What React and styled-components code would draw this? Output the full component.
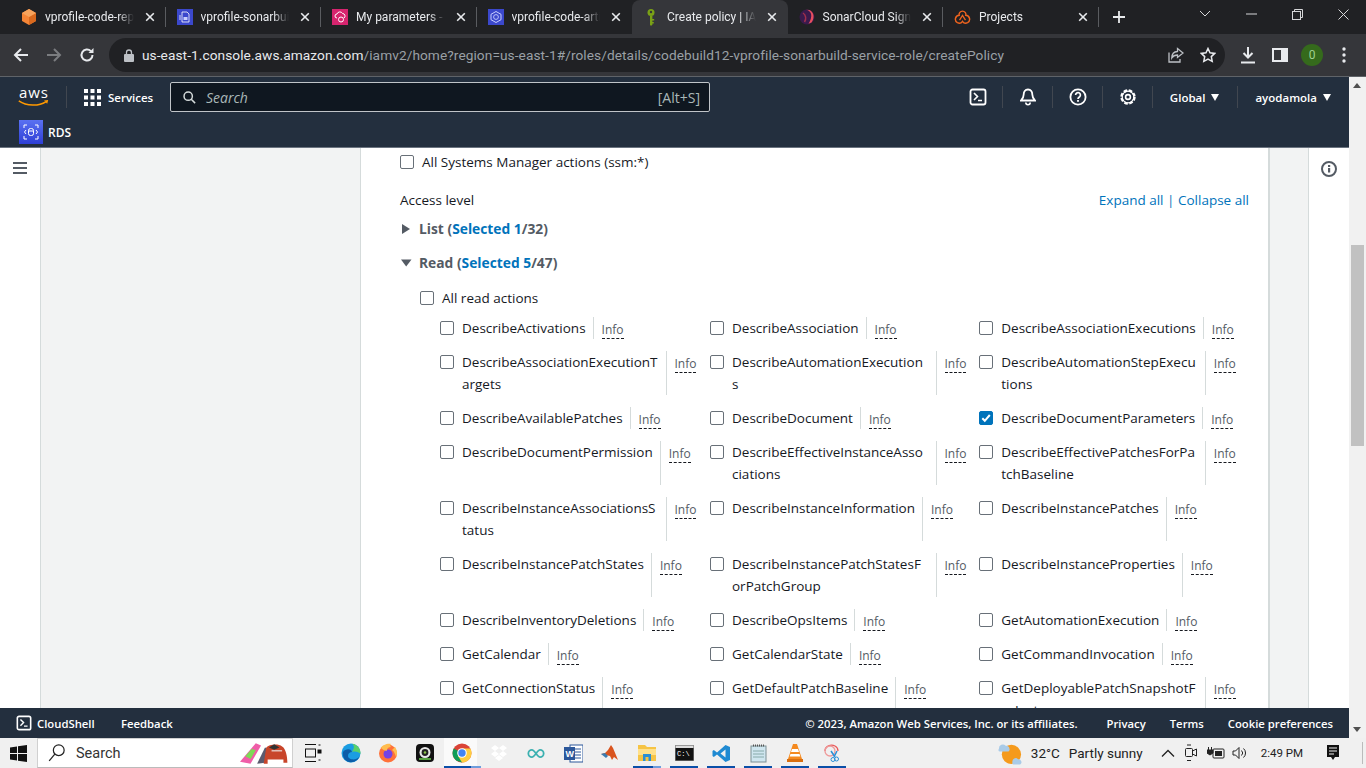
import React from "react";
import styled, { createGlobalStyle } from "styled-components";

const Global = createGlobalStyle`
  html, body { margin: 0; padding: 0; height: 100%; overflow: hidden; }
  body { font-family: "Open Sans", "Noto Sans", sans-serif; background: #fff; }
  * { box-sizing: border-box; }
  svg { display: block; }
`;

const Screen = styled.div`
  width: 1366px; height: 768px; display: flex; flex-direction: column; overflow: hidden;
`;

/* ---------- browser tabs ---------- */
const TabStrip = styled.div`
  height: 34px; background: #202124; display: flex; align-items: stretch; padding-left: 10px; flex: none;
`;
const Tab = styled.div`
  width: 155.5px; height: 34px; padding: 0 8px 0 11px; display: flex; align-items: center; gap: 8px;
  color: #e8eaed;
  background: ${p => (p.$active ? "#35363a" : "transparent")};
  border-radius: ${p => (p.$active ? "8px 8px 0 0" : "0")};
  position: relative;
  flex: none;
  ${p => p.$sep && `&::after{content:"";position:absolute;right:0;top:7px;height:20px;width:1px;background:#5a5c60;}`}
`;
const TabTitle = styled.span`
  flex: 1; white-space: nowrap; overflow: hidden; min-width: 0;
  mask-image: linear-gradient(90deg, #000 82%, transparent);
  font: 12px "Roboto", "Liberation Sans", sans-serif;
`;
const TabClose = styled.span`
  flex: none; width: 16px; display: flex; justify-content: center; color: #e8eaed;
`;
const NewTab = styled.div`
  width: 36px; margin-left: 2px; display: flex; align-items: center; justify-content: center; color: #e8eaed;
`;
const StripSpacer = styled.div`flex: 1;`;
const WindowButton = styled.div`
  width: 46px; display: flex; align-items: center; justify-content: center; color: #d6d7d9; padding-bottom: 6px;
`;

/* ---------- browser toolbar ---------- */
const Toolbar = styled.div`
  height: 43px; background: #35363a; display: flex; align-items: center; padding: 0 6px 0 4px; flex: none;
  border-bottom: 1px solid #5f6368;
`;
const NavIcon = styled.div`
  width: 33px; height: 34px; display: flex; align-items: center; justify-content: center;
  color: ${p => (p.$dim ? "#7b7d80" : "#e8eaed")}; flex: none;
`;
const AddressBar = styled.div`
  margin-left: 6px; width: 1116px; height: 34px; border-radius: 17px; background: #202124;
  display: flex; align-items: center; padding: 0 1px 0 15px; gap: 8px; flex: none;
`;
const Url = styled.div`
  flex: 1; font: 13.7px "Roboto", "Liberation Sans", sans-serif; color: #9aa0a6; white-space: nowrap; overflow: hidden;
  letter-spacing: 0.07px;
`;
const UrlHost = styled.span`color: #e8eaed;`;
const BarIcon = styled.div`
  width: 32px; display: flex; justify-content: center; color: #bdc1c6; margin-left: -8px; flex: none;
`;
const ToolIcons = styled.div`
  display: flex; align-items: center; flex: none; margin-left: 7px;
`;
const ToolIcon = styled.div`
  width: 32px; height: 32px; display: flex; align-items: center; justify-content: center; color: #e8eaed; flex: none;
`;
const Avatar = styled.div`
  width: 22px; height: 22px; border-radius: 50%; background: #356a1c; color: #9fd08f;
  font: 12px "Roboto", sans-serif; display: flex; align-items: center; justify-content: center;
`;

/* ---------- console nav ---------- */
const ConsoleNav = styled.div`
  height: 70px; background: #232f3e; flex: none; display: flex; flex-direction: column;
  color: #fff; font: 600 11.5px "Open Sans", sans-serif;
`;
const NavTop = styled.div`
  height: 40px; display: flex; align-items: center; padding-left: 18px;
`;
const NavDivider = styled.div`
  width: 1px; height: 22px; background: #414750; flex: none; margin: ${p => p.$m || "0"};
`;
const ServicesMenu = styled.div`
  display: flex; align-items: center; gap: 7px; width: 70px; flex: none;
`;
const SearchBox = styled.div`
  margin-left: 16px; width: 540px; height: 30px; background: #0f1720; border: 1px solid #c0c4c8; border-radius: 2px;
  display: flex; align-items: center; padding: 0 9px 0 12px; gap: 10px; flex: none; font-weight: 400; font-size: 14px; color: #aab7b8;
`;
const SearchText = styled.span`font-style: italic; flex: 1;`;
const SearchKey = styled.span`font-size: 14px;`;
const NavIcons = styled.div`
  margin-left: auto; display: flex; align-items: center; padding-right: 18px;
`;
const NavGlyph = styled.div`
  width: 49px; padding-left: 1px; display: flex; justify-content: center; align-items: center; flex: none; color: #fff;
`;
const NavSelect = styled.div`
  display: flex; align-items: center; gap: 6px; padding: 0 ${p => p.$pr || 0}px 0 ${p => p.$pl || 0}px; flex: none; color: #fff;
`;
const Caret = styled.span`
  width: 0; height: 0; border-left: 4.5px solid transparent; border-right: 4.5px solid transparent; border-top: 7px solid #fff;
  display: inline-block;
`;
const Pinned = styled.div`
  height: 30px; display: flex; align-items: center; padding: 0 0 0 19px; gap: 5px; font-size: 12px;
`;
const RdsTile = styled.div`
  width: 24px; height: 24px; background: linear-gradient(0deg, #2e3fd6, #5a71f2); display: flex; align-items: center; justify-content: center; flex: none;
`;

/* ---------- content ---------- */
const Body = styled.div`
  flex: 1; min-height: 0; display: flex; background: #f2f3f3; border-top: 1px solid #6b7480;
`;
const SideRail = styled.div`
  width: 41px; background: #fff; border-right: 1px solid #d5dbdb; padding: 14px 0 0 13px; flex: none; color: #545b64;
`;
const Gutter = styled.div`width: ${p => p.$w}px; flex: none;`;
const Panel = styled.div`
  width: 910px; flex: none; background: #fff; border-left: 1px solid #d5dbdb; border-right: 2px solid #d5dbdb;
  padding: 3px 19px 0 39px; overflow: hidden; color: #16191f;
  font: 13.5px/22px "Open Sans", sans-serif;
`;
const RightRail = styled.div`
  width: 41px; flex: none; background: #fff; border-left: 1px solid #d5dbdb; padding: 13px 0 0 12px; color: #545b64;
`;
const CheckRow = styled.label`
  display: flex; align-items: center; gap: 8px; height: 22px; padding-left: ${p => p.$indent || 0}px;
  margin-top: ${p => p.$mt || 0}px;
`;
const Box = styled.span`
  width: 14px; height: 14px; flex: none; border-radius: 2px; border: 1px solid #687078; background: #fff;
  display: inline-flex; align-items: center; justify-content: center; margin-top: ${p => p.$mt || 0}px;
  ${p => p.$on && "background:#0073bb;border-color:#0073bb;"}
`;
const AccessHead = styled.div`
  margin-top: 16px; display: flex; justify-content: space-between;
`;
const Links = styled.div`color: #0073bb;`;
const Group = styled.div`
  display: flex; align-items: center; margin-top: ${p => p.$mt}px; height: 22px; font-weight: 700; font-size: 13.8px; color: #545b64; gap: 9px;
`;
const Blue = styled.span`color: #0073bb;`;
const Arrow = styled.span`
  width: 10px; flex: none; display: flex; justify-content: flex-start; color: #545b64;
`;
const ActionGrid = styled.div`
  display: grid; grid-template-columns: 270px 269.3px 270px; margin: 8px 0 0 40px; row-gap: 12px;
`;
const Action = styled.div`
  display: flex; align-items: flex-start;
`;
const ActionLabel = styled.span`
  margin-left: 8px; max-width: 196.5px; word-break: break-all;
`;
const InfoWrap = styled.span`
  margin-left: 7px; padding-left: 8px; border-left: 1px solid #d5dbdb; align-self: stretch; flex: none;
  display: flex; align-items: flex-start; min-height: 22px;
`;
const InfoLink = styled.span`
  display: block; font-size: 12px; line-height: 15px; padding-bottom: 1px; color: #545b64; border-bottom: 1px dashed #16191f; margin-top: 5px;
`;

/* ---------- footer ---------- */
const Footer = styled.div`
  height: 30px; flex: none; background: #232f3e; color: #fff; display: flex; align-items: center; padding: 0 16px;
  font: 600 11.3px "Open Sans", sans-serif;
`;
const FooterLeft = styled.div`display: flex; align-items: center; gap: 5px; width: 105px;`;
const FooterRight = styled.div`margin-left: auto; display: flex; gap: 24px;`;
const Copyright = styled.span`margin-right: 5px;`;

/* ---------- scrollbar ---------- */
const Middle = styled.div`
  flex: 1; min-height: 0; display: flex;
`;
const Main = styled.div`
  width: 1349px; display: flex; flex-direction: column; flex: none;
`;
const Scrollbar = styled.div`
  width: 17px; background: #f1f1f1; position: relative; flex: none;
`;
const ScrollThumb = styled.div`
  position: absolute; left: 2px; width: 13px; top: 168px; height: 201px; background: #c1c1c1;
`;
const ScrollArrow = styled.div`
  position: absolute; ${p => p.$pos}; left: 4px; width: 0; height: 0; border-left: 4px solid transparent; border-right: 4px solid transparent;
  ${p => (p.$up ? "border-bottom: 5px solid #505050;" : "border-top: 5px solid #505050;")}
`;

/* ---------- taskbar ---------- */
const Taskbar = styled.div`
  height: 30px; flex: none; background: #f0f0f0; display: flex; align-items: center; color: #111;
  font: 14px "Roboto", "Liberation Sans", sans-serif;
`;
const StartBtn = styled.div`width: 37px; display: flex; justify-content: center; flex: none;`;
const TaskSearch = styled.div`
  width: 256px; height: 30px; background: #fff; border: 1px solid #d0d0d0; border-bottom-color: #bbb; display: flex; align-items: center; padding-left: 10px; gap: 11px; flex: none;
  font-size: 14.5px; color: #333;
`;
const TaskSearchArt = styled.div`margin-left: auto; margin-right: 2px; display: flex; align-items: center;`;
const TaskIcon = styled.div`
  width: ${p => p.$w}px; height: 30px; display: flex; align-items: center; justify-content: center; flex: none; position: relative;
  ${p => p.$active && "background: linear-gradient(90deg, #fafafa 90%, #f0f0f0 90%);"}
  ${p => p.$open && `&::after{content:"";position:absolute;left:${p.$active ? 0 : 4.5}px;right:${p.$active ? 0 : 4.5}px;bottom:0;height:2px;background:${p.$stack ? "linear-gradient(90deg,#0a4fa8 72%,#6f9ddc 72%)" : "#0a4fa8"};}`}
`;
const TrayWrap = styled.div`
  margin-left: auto; display: flex; align-items: center; height: 30px; color: #222;
`;
const TrayText = styled.span`
  white-space: nowrap; margin: ${p => p.$m || 0}; font-size: ${p => p.$s || 14}px;
`;
const TrayIcon = styled.div`
  width: ${p => p.$w || 22}px; margin-left: ${p => p.$ml || 0}px; display: flex; justify-content: center; flex: none;
`;
const DesktopEdge = styled.div`width: 1px; height: 22px; background: #bbb; margin-right: 3px; flex: none;`;

/* ---------- icons ---------- */
const X = () => (
  <svg width="10" height="10" viewBox="0 0 10 10"><path d="M1.2 1.2l7.6 7.6M8.8 1.2L1.2 8.8" stroke="currentColor" strokeWidth="1.6" /></svg>
);
const Fav = {
  pipeline: (
    <svg width="16" height="18" viewBox="0 0 16 18"><path d="M8 1l7 4v8l-7 4-7-4V5z" fill="#f58536" /><path d="M8 9l7-4v8l-7 4z" fill="#d9691e" /><path d="M8 1l7 4-7 4-7-4z" fill="#f7a35c" /></svg>
  ),
  build: (
    <svg width="16" height="16" viewBox="0 0 16 16"><rect width="16" height="16" fill="#3b48cc" /><path d="M5 3h5l2 2v8H5z" fill="none" stroke="#fff" strokeWidth=".8" /><path d="M3 6v5" stroke="#fff" strokeWidth=".8" /><rect x="6.500" y="8" width="4" height="3" fill="#c9cfff" /></svg>
  ),
  params: (
    <svg width="16" height="16" viewBox="0 0 16 16"><rect width="16" height="16" fill="#d6246e" /><path d="M5 9a2 2 0 010-4 3 3 0 015.500-.5A2.500 2.500 0 0112 9" fill="none" stroke="#fff" strokeWidth="1" /><circle cx="9" cy="10.500" r="2.500" fill="none" stroke="#fff" strokeWidth="1" /></svg>
  ),
  artifact: (
    <svg width="16" height="16" viewBox="0 0 16 16"><rect width="16" height="16" fill="#3b48cc" /><path d="M8 2.500l5 2.800v5.400l-5 2.800-5-2.800V5.300z" fill="none" stroke="#c9cfff" strokeWidth="1" /><circle cx="8" cy="8" r="2.400" fill="none" stroke="#c9cfff" strokeWidth=".9" /></svg>
  ),
  key: (
    <svg width="16" height="18" viewBox="-2 0 16 18"><circle cx="6" cy="4.500" r="3.500" fill="#7aa116" /><circle cx="6" cy="4" r="1.200" fill="#35363a" /><path d="M5 8h2.400v8.500L6 18l-1-1.200z" fill="#7aa116" /><path d="M7 11h2.200v1.600H7zM7 14h1.800v1.400H7z" fill="#7aa116" /></svg>
  ),
  sonar: (
    <svg width="16" height="16" viewBox="0 0 16 16"><circle cx="8" cy="8" r="7.500" fill="#3a1a4d" /><path d="M7 .8c6 1 7 7.200 2.500 14l3-1.200c3.500-4.500 2.500-10.500-2-12.500z" fill="#e84f5e" /><path d="M4 4c3 2 3.500 6 1.500 9" fill="none" stroke="#a0304c" strokeWidth="1.500" /></svg>
  ),
  cloud: (
    <svg width="17" height="17" viewBox="0 0 20 18"><path d="M10 1.500a4 4 0 013.900 4.900A4.600 4.600 0 0116 15a4.600 4.600 0 01-6-1.500A4.600 4.600 0 014 15 4.600 4.600 0 016.100 6.400 4 4 0 0110 1.500z" fill="none" stroke="#f0641e" strokeWidth="1.700" /><path d="M6.500 12L10 6.500l3.500 5.500" fill="none" stroke="#f0641e" strokeWidth="1.500" /></svg>
  ),
};
const tabs = [
  { t: "vprofile-code-repo", i: Fav.pipeline, sep: 1 },
  { t: "vprofile-sonarbuild", i: Fav.build, sep: 1 },
  { t: "My parameters - Systems", i: Fav.params, sep: 1 },
  { t: "vprofile-code-artifact", i: Fav.artifact },
  { t: "Create policy | IAM", i: Fav.key, active: 1 },
  { t: "SonarCloud Sign in", i: Fav.sonar, sep: 1 },
  { t: "Projects", i: Fav.cloud, sep: 1 },
];

const AwsLogo = () => (
  <svg width="32" height="20" viewBox="0 0 32 20">
    <text x="1" y="11" fontFamily="Open Sans" fontSize="15" fontWeight="400" fill="#fff" textLength="29">aws</text>
    <path d="M.8 13.800c8 5.500 20 5.500 27 1" fill="none" stroke="#ff9900" strokeWidth="1.600" />
    <path d="M26 13.500l4.200-.5-1 3.800z" fill="#ff9900" />
  </svg>
);
const Grid9 = () => (
  <svg width="17" height="17" viewBox="0 0 17 17" fill="#fff">
    {[0, 6.500, 13].flatMap(y => [0, 6.500, 13].map(x => <rect key={`${x}-${y}`} x={x} y={y} width="4" height="4" />))}
  </svg>
);
const Shell = ({ s = 18 }) => (
  <svg width={s} height={s} viewBox="0 0 18 18"><rect x="1.500" y="1.500" width="15" height="15" rx="2" fill="none" stroke="#fff" strokeWidth="1.800" /><path d="M5 5l3.500 3.500L5 12M9 12.500h4" fill="none" stroke="#fff" strokeWidth="1.600" /></svg>
);
const Bell = () => (
  <svg width="16" height="18" viewBox="0 0 16 18"><path d="M8 1.500c-3 0-4.300 2.400-4.300 5 0 3-1.400 4.500-2.700 6h14c-1.300-1.500-2.700-3-2.700-6 0-2.600-1.300-5-4.300-5z" fill="none" stroke="#fff" strokeWidth="1.800" /><path d="M5.800 14.500a2.200 2.200 0 004.400 0" fill="none" stroke="#fff" strokeWidth="1.600" /></svg>
);
const Help = () => (
  <svg width="18" height="18" viewBox="0 0 18 18"><circle cx="9" cy="9" r="7.600" fill="none" stroke="#fff" strokeWidth="1.800" /><path d="M6.600 7a2.400 2.400 0 114 1.800c-.9.700-1.600 1.100-1.600 2.200" fill="none" stroke="#fff" strokeWidth="1.700" /><rect x="8.100" y="12" width="1.800" height="1.800" fill="#fff" /></svg>
);
const Gear = () => (
  <svg width="18" height="18" viewBox="0 0 18 18"><circle cx="9" cy="9" r="6.500" fill="none" stroke="#fff" strokeWidth="2.400" strokeDasharray="3.500 1.600" /><circle cx="9" cy="9" r="5.800" fill="none" stroke="#fff" strokeWidth="1.200" /><circle cx="9" cy="9" r="2.400" fill="none" stroke="#fff" strokeWidth="1.600" /></svg>
);
const Check = () => (
  <svg width="10" height="10" viewBox="0 0 10 10"><path d="M1.300 5.300l2.500 2.500 5-5.800" fill="none" stroke="#fff" strokeWidth="2" /></svg>
);
const Tri = ({ open }) => (
  <svg width="12" height="10" viewBox="0 0 12 10" fill="#545b64" style={{ flex: "none" }}>
    {open ? <path d="M1 1.500h10.500L6.200 8.500z" /> : <path d="M2 0v10l8-5z" />}
  </svg>
);

const actions = [
  ["DescribeActivations"], ["DescribeAssociation"], ["DescribeAssociationExecutions"],
  ["DescribeAssociationExecutionTargets"], ["DescribeAutomationExecutions"], ["DescribeAutomationStepExecutions"],
  ["DescribeAvailablePatches"], ["DescribeDocument"], ["DescribeDocumentParameters", true],
  ["DescribeDocumentPermission"], ["DescribeEffectiveInstanceAssociations"], ["DescribeEffectivePatchesForPatchBaseline"],
  ["DescribeInstanceAssociationsStatus"], ["DescribeInstanceInformation"], ["DescribeInstancePatches"],
  ["DescribeInstancePatchStates"], ["DescribeInstancePatchStatesForPatchGroup"], ["DescribeInstanceProperties"],
  ["DescribeInventoryDeletions"], ["DescribeOpsItems"], ["GetAutomationExecution"],
  ["GetCalendar"], ["GetCalendarState"], ["GetCommandInvocation"],
  ["GetConnectionStatus"], ["GetDefaultPatchBaseline"], ["GetDeployablePatchSnapshotForInstance"],
];

const taskIcons = [
  { k: "view", w: 39.500, n: <svg width="18" height="18" viewBox="0 0 18 18" fill="none" stroke="#111"><path d="M1 .5h11M1 17.500h11" /><rect x="1.500" y="5" width="10" height="8" /><rect x="14" y="6" width="3" height="3" fill="#111" /><path d="M14.500 1h2M14.500 16h2" /></svg> },
  { k: "edge", n: <svg width="20" height="20" viewBox="0 0 20 20"><circle cx="10" cy="10" r="9.500" fill="#1b9de2" /><path d="M19 12c-1 5-6 8-11 7C4 18 1 14 2 9c2-3 8-4 9 0-2 0-4 1-4 4s5 4 8 3 4-3 4-4z" fill="#0c5da8" /><path d="M11 9c3-1 7 0 8.500 2C20 6 16 1 11 .8c3 2 2 5 0 8.200z" fill="#5ad06a" /></svg> },
  { k: "firefox", n: <svg width="20" height="20" viewBox="0 0 20 20"><circle cx="10" cy="10.500" r="9" fill="#ff7139" /><circle cx="10" cy="11" r="4.500" fill="#7542e5" /><path d="M3 5c1-3 7-5 10-4-1 1-1 2 0 3-2 0-4 1-4 3s-4 0-6-2z" fill="#ffbd4f" /><path d="M17 4c2 3 3 7 1 10-1-3-2-6-4-7z" fill="#ffbd4f" /></svg> },
  { k: "obs", n: <svg width="20" height="20" viewBox="0 0 20 20"><rect x="1" y="1" width="18" height="18" rx="4" fill="#111" /><circle cx="10" cy="9.500" r="5.500" fill="#e8e8e8" /><circle cx="10" cy="9.500" r="3.400" fill="#222" /><circle cx="10" cy="9.500" r="1.300" fill="#8bc34a" /><path d="M4 16h12" stroke="#6cd14f" strokeWidth="1.500" /></svg> },
  { k: "chrome", active: 1, open: 1, stack: 1, n: <svg width="20" height="20" viewBox="0 0 20 20"><circle cx="10" cy="10" r="9.500" fill="#db4437" /><path d="M10 10L1.800 5.500A9.500 9.500 0 004.500 17.800L10 19.500z" fill="#0f9d58" /><path d="M10 5.500h8.400A9.500 9.500 0 0110 19.500L6 13z" fill="#ffcd40" /><circle cx="10" cy="10" r="4.800" fill="#fff" /><circle cx="10" cy="10" r="3.700" fill="#4285f4" /></svg> },
  { k: "dropbox", n: <svg width="18" height="18" viewBox="0 0 18 18" fill="#fff"><path d="M5 1L1 4l4 3 4-3zM13 1L9 4l4 3 4-3zM5 7l-4 3 4 3 4-3zM13 7l-4 3 4 3 4-3zM5 14l4 3 4-3-4-3z" /></svg> },
  { k: "arduino", n: <svg width="18" height="11" viewBox="0 0 20 12" fill="none" stroke="#3bb0b0" strokeWidth="2"><path d="M5.500 2a4 4 0 100 8c3 0 6-8 9-8a4 4 0 110 8c-3 0-6-8-9-8z" /></svg> },
  { k: "word", n: <svg width="19" height="19" viewBox="0 0 19 19"><rect x="6" y="1" width="13" height="17" fill="#fff" stroke="#2b579a" /><path d="M10 5h7M10 8h7M10 11h7M10 14h7" stroke="#2b579a" /><rect y="3" width="11" height="13" fill="#2b579a" /><text x="1.500" y="13" fontSize="9" fontFamily="Liberation Sans" fontWeight="700" fill="#fff">W</text></svg> },
  { k: "matlab", n: <svg width="20" height="18" viewBox="0 0 20 18"><path d="M1 10l4-1 3-3 3-5 2 3 5 12-4-3-2 3-2-4z" fill="#d9541e" /><path d="M1 10l4-1 3 3-2 2z" fill="#3b7cb0" /></svg> },
  { k: "files", open: 1, stack: 1, n: <svg width="20" height="18" viewBox="0 0 20 18"><path d="M1 1h7l2 2h9v14H1z" fill="#f6c445" /><rect x="1" y="5" width="18" height="6" fill="#ffe08a" /><rect x="6" y="10" width="8" height="7" fill="#2a8fd6" /><rect x="8.500" y="13" width="3" height="4" fill="#f6c445" /></svg> },
  { k: "cmd", open: 1, n: <svg width="19" height="16" viewBox="0 0 19 16"><rect width="19" height="16" fill="#111" stroke="#999" /><rect x=".5" y=".5" width="18" height="2.500" fill="#ddd" /><text x="2" y="11" fontSize="7" fontFamily="Liberation Mono" fill="#fff">C:\</text></svg> },
  { k: "vscode", open: 1, n: <svg width="19" height="19" viewBox="0 0 19 19"><path d="M13.500 1L18 3v13l-4.500 2L5 10.500 1.800 13 .5 12V7l1.300-1L5 8.500z" fill="#1f8ad2" /><path d="M13.500 5.500v8l-5-4z" fill="#f0f0f0" /></svg> },
  { k: "notepad", open: 1, n: <svg width="17" height="19" viewBox="0 0 17 19"><rect x="1" y="2" width="15" height="16" fill="#cfe6ef" stroke="#7d8f94" /><path d="M3 1.500h11" stroke="#555" strokeDasharray="1 1" strokeWidth="2" /><path d="M3 7h11M3 10h11M3 13h11" stroke="#8aa" /></svg> },
  { k: "vlc", open: 1, n: <svg width="18" height="20" viewBox="0 0 18 20"><path d="M7 1h4l5 15H2z" fill="#f58a1f" /><path d="M6 6h6l1 3H5zM4.500 11h9l.8 2.500H3.700z" fill="#fff" /><rect x="1" y="16" width="16" height="3" fill="#d96f10" /></svg> },
  { k: "snip", open: 1, n: <svg width="20" height="20" viewBox="0 0 20 20" fill="none"><path d="M3 8c0-5 6-7 10-5 2 1 3 3 3 5" stroke="#ea5a5a" strokeWidth="1.300" /><circle cx="8" cy="8" r="5" stroke="#ee9a9a" strokeWidth="1.300" /><path d="M9 8l4 6M15 8l-3 6" stroke="#2a8fd6" strokeWidth="1.500" /><circle cx="11" cy="16.500" r="2" stroke="#2a8fd6" /><circle cx="14.500" cy="16" r="2" stroke="#2a8fd6" /></svg> },
];

export default function App() {
  return (
    <Screen>
      <Global />
      <TabStrip>
        {tabs.map(t => (
          <Tab key={t.t} $active={t.active} $sep={t.sep}>
            {t.i}
            <TabTitle>{t.t}</TabTitle>
            <TabClose><X /></TabClose>
          </Tab>
        ))}
        <NewTab>
          <svg width="14" height="14" viewBox="0 0 14 14"><path d="M7 1v12M1 7h12" stroke="currentColor" strokeWidth="1.800" /></svg>
        </NewTab>
        <StripSpacer />
        <WindowButton><svg width="12" height="8" viewBox="0 0 12 8"><path d="M1 1l5 5 5-5" fill="none" stroke="currentColor" /></svg></WindowButton>
        <WindowButton><svg width="11" height="2" viewBox="0 0 11 2"><path d="M0 1h11" stroke="currentColor" /></svg></WindowButton>
        <WindowButton><svg width="11" height="11" viewBox="0 0 11 11" fill="none" stroke="currentColor"><rect x=".5" y="2.500" width="8" height="8" /><path d="M2.500 2.500v-2h8v8h-2" /></svg></WindowButton>
        <WindowButton><svg width="11" height="11" viewBox="0 0 11 11"><path d="M.5.500l10 10M10.500.500l-10 10" stroke="currentColor" /></svg></WindowButton>
      </TabStrip>

      <Toolbar>
        <NavIcon><svg width="16" height="16" viewBox="0 0 16 16" fill="none" stroke="currentColor" strokeWidth="2"><path d="M15 8H2M8 2L2 8l6 6" /></svg></NavIcon>
        <NavIcon $dim><svg width="16" height="16" viewBox="0 0 16 16" fill="none" stroke="currentColor" strokeWidth="2"><path d="M1 8h13M8 2l6 6-6 6" /></svg></NavIcon>
        <NavIcon><svg width="16" height="16" viewBox="0 0 16 16" fill="none" stroke="currentColor" strokeWidth="2"><path d="M13.500 8a5.500 5.500 0 11-1.600-3.900" /><path d="M14.500 1v5h-5z" fill="currentColor" stroke="none" /></svg></NavIcon>
        <AddressBar>
          <svg width="10" height="13" viewBox="0 0 10 13"><rect y="5" width="10" height="8" rx="1" fill="#bdc1c6" /><path d="M2.500 5V3.500a2.500 2.500 0 015 0V5" fill="none" stroke="#bdc1c6" strokeWidth="1.300" /></svg>
          <Url><UrlHost>us-east-1.console.aws.amazon.com</UrlHost>/iamv2/home?region=us-east-1#/roles/details/codebuild12-vprofile-sonarbuild-service-role/createPolicy</Url>
          <BarIcon><svg width="16" height="16" viewBox="0 0 16 16" fill="none" stroke="currentColor" strokeWidth="1.300"><path d="M1 5.500V15h11v-3" /><path d="M9.500 1.500L15 6l-5.500 4.500V8C7 8 5 9 3.800 11c0-4 2-6.300 5.700-6.500z" /></svg></BarIcon>
          <BarIcon><svg width="16" height="16" viewBox="0 0 16 16" fill="none" stroke="#e8eaed" strokeWidth="1.500"><path d="M8 1.500l2 4.300 4.700.6-3.400 3.200.9 4.700L8 12l-4.200 2.300.9-4.700L1.300 6.400 6 5.800z" /></svg></BarIcon>
        </AddressBar>
        <ToolIcons>
          <ToolIcon><svg width="16" height="18" viewBox="0 0 16 18" fill="none" stroke="currentColor" strokeWidth="2"><path d="M8 1v10M3.500 7L8 11.500 12.500 7M1 16.500h14" /></svg></ToolIcon>
          <ToolIcon><svg width="16" height="14" viewBox="0 0 16 14"><rect x="1" y="1" width="14" height="12" fill="none" stroke="currentColor" strokeWidth="2" /><rect x="9" y="1" width="6" height="12" fill="currentColor" /></svg></ToolIcon>
          <ToolIcon><Avatar>0</Avatar></ToolIcon>
          <ToolIcon><svg width="4" height="16" viewBox="0 0 4 16" fill="currentColor"><circle cx="2" cy="2" r="1.700" /><circle cx="2" cy="8" r="1.700" /><circle cx="2" cy="14" r="1.700" /></svg></ToolIcon>
        </ToolIcons>
      </Toolbar>

      <Middle>
        <Main>
          <ConsoleNav>
            <NavTop>
              <AwsLogo />
              <NavDivider $m="0 17px 0 16px" />
              <ServicesMenu><Grid9 />Services</ServicesMenu>
              <SearchBox>
                <svg width="13" height="15" viewBox="0 0 15 15" fill="none" stroke="#d5dbdb" strokeWidth="1.700"><circle cx="6" cy="6" r="4.800" /><path d="M9.500 9.500L14 14" /></svg>
                <SearchText>Search</SearchText>
                <SearchKey>[Alt+S]</SearchKey>
              </SearchBox>
              <NavIcons>
                <NavGlyph><Shell /></NavGlyph>
                <NavDivider />
                <NavGlyph><Bell /></NavGlyph>
                <NavDivider />
                <NavGlyph><Help /></NavGlyph>
                <NavDivider />
                <NavGlyph><Gear /></NavGlyph>
                <NavDivider />
                <NavSelect $pl={17} $pr={18}>Global<Caret /></NavSelect>
                <NavDivider />
                <NavSelect $pl={17}>ayodamola<Caret /></NavSelect>
              </NavIcons>
            </NavTop>
            <Pinned>
              <RdsTile>
                <svg width="18" height="18" viewBox="0 0 18 18" fill="none" stroke="#fff" strokeWidth="1"><path d="M2 5V2h3M13 2h3v3M2 13v3h3M16 13v3h-3" /><rect x="6.500" y="5.500" width="5" height="7" rx="2" /><path d="M6.500 8h5" /><path d="M4 7L2.500 9 4 11M14 7l1.500 2-1.500 2" /></svg>
              </RdsTile>
              RDS
            </Pinned>
          </ConsoleNav>
          <Body>
            <SideRail>
              <svg width="14" height="12" viewBox="0 0 14 12"><path d="M0 1h14M0 6h14M0 11h14" stroke="currentColor" strokeWidth="2" /></svg>
            </SideRail>
            <Gutter $w={319} />
            <Panel>
              <CheckRow><Box />All Systems Manager actions (ssm:*)</CheckRow>
              <AccessHead>
                <span>Access level</span>
                <Links>Expand all | Collapse all</Links>
              </AccessHead>
              <Group $mt={7}><Arrow><Tri /></Arrow><span>List (<Blue>Selected 1</Blue>/32)</span></Group>
              <Group $mt={12}><Arrow><Tri open /></Arrow><span>Read (<Blue>Selected 5</Blue>/47)</span></Group>
              <CheckRow $indent={20} $mt={13}><Box />All read actions</CheckRow>
              <ActionGrid>
                {actions.map(([name, on]) => (
                  <Action key={name}>
                    <Box $on={on} $mt={4}>{on && <Check />}</Box>
                    <ActionLabel>{name}</ActionLabel>
                    <InfoWrap><InfoLink>Info</InfoLink></InfoWrap>
                  </Action>
                ))}
              </ActionGrid>
            </Panel>
            <Gutter $w={38} />
            <RightRail>
              <svg width="16" height="16" viewBox="0 0 16 16"><circle cx="8" cy="8" r="7" fill="none" stroke="currentColor" strokeWidth="2" /><rect x="7" y="7" width="2.200" height="4.500" fill="currentColor" /><rect x="7" y="4" width="2.200" height="2" fill="currentColor" /></svg>
            </RightRail>
          </Body>
          <Footer>
            <FooterLeft><Shell s={16} />CloudShell</FooterLeft>
            <span>Feedback</span>
            <FooterRight>
              <Copyright>© 2023, Amazon Web Services, Inc. or its affiliates.</Copyright>
              <span>Privacy</span>
              <span>Terms</span>
              <span>Cookie preferences</span>
            </FooterRight>
          </Footer>
        </Main>
        <Scrollbar>
          <ScrollArrow $up $pos="top: 6px" />
          <ScrollThumb />
          <ScrollArrow $pos="bottom: 6px" />
        </Scrollbar>
      </Middle>

      <Taskbar>
        <StartBtn>
          <svg width="17" height="17" viewBox="0 0 17 17" fill="#111"><path d="M0 2.500l7-1v6.500H0zM8 1.300l9-1.300v8H8zM0 9h7v6.500l-7-1zM8 9h9v8l-9-1.300z" /></svg>
        </StartBtn>
        <TaskSearch>
          <svg width="17" height="18" viewBox="0 0 15 16" fill="none" stroke="#222" strokeWidth="1.100"><circle cx="9.500" cy="5.500" r="4.800" /><path d="M6 9L1 15" /></svg>
          Search
          <TaskSearchArt>
            <svg width="50" height="26" viewBox="0 0 38 24" preserveAspectRatio="none">
              <path d="M0 20L12 3l4 2-8 17z" fill="#ef5da8" /><path d="M4 15l5-7 3 1.500-4 8z" fill="#7ed957" />
              <path d="M13 22l6-15 4 2-4 12z" fill="#5a5a6e" />
              <path d="M20 7c2-3 9-4 12-1 3 2 4 10 4 15h-3v-3H21v4h-3z" fill="#c8452a" /><path d="M26 4l-4 3 4 2 4-2z" fill="#333" /><path d="M24 10h8" stroke="#eee" />
            </svg>
          </TaskSearchArt>
        </TaskSearch>
        {taskIcons.map(i => (
          <TaskIcon key={i.k} $w={i.w || 37} $active={i.active} $open={i.open} $stack={i.stack}>
            {i.n}
          </TaskIcon>
        ))}
        <TrayWrap>
          <svg width="26" height="26" viewBox="1 0 27 27">
            <circle cx="16" cy="15" r="10" fill="#f59a1c" /><path d="M3 9a4 4 0 017-3 3.500 3.500 0 013 6H4a2 2 0 01-1-3z" fill="#a9cbe8" /><path d="M17 23a3.500 3.500 0 016-3 3 3 0 012 5.500h-7a2 2 0 01-1-2.500z" fill="#a9cbe8" />
          </svg>
          <TrayText $m="0 0 0 8px" $s={13.500}>32°C</TrayText>
          <TrayText $m="0 0 0 9px" $s={13.500}>Partly sunny</TrayText>
          <TrayIcon $ml={14}><svg width="14" height="8" viewBox="0 0 14 8" fill="none" stroke="#222" strokeWidth="1.300"><path d="M1 7.500l6-6 6 6" /></svg></TrayIcon>
          <TrayIcon $w={25}><svg width="14" height="18" viewBox="0 0 14 18" fill="none" stroke="#222"><rect x="1.500" y="4.500" width="7" height="8" rx="1" /><path d="M8.500 7l4-2v7l-4-2M3 1h4M3 16.500h4" /></svg></TrayIcon>
          <TrayIcon $w={24}><svg width="18" height="12" viewBox="0 0 18 12" fill="#222"><rect x="6" y="2" width="11" height="9" rx="1" fill="none" stroke="#222" /><rect x="8" y="4" width="7" height="5" /><path d="M0 3h6v3L3 8 0 6zM1.500 0v3M4.500 0v3" stroke="#222" /></svg></TrayIcon>
          <TrayIcon $w={24}><svg width="16" height="14" viewBox="0 0 16 14" fill="none" stroke="#222"><path d="M1 5h2.500L7 1.500v11L3.500 9H1zM9.500 4.500a3.500 3.500 0 010 5M11.500 2.500a6 6 0 010 9" /></svg></TrayIcon>
          <TrayText $m="0 20px 0 9px" $s={11.500}>2:49 PM</TrayText>
          <TrayIcon $w={20}><svg width="14" height="18" viewBox="0 0 14 18"><path d="M1 1h12v12H9l-2 3-2-3H1z" fill="#111" /><path d="M3 4h8M3 7h8M3 10h5" stroke="#f0f0f0" /></svg></TrayIcon>
          <TrayIcon $w={19} />
          <DesktopEdge />
        </TrayWrap>
      </Taskbar>
    </Screen>
  );
}
